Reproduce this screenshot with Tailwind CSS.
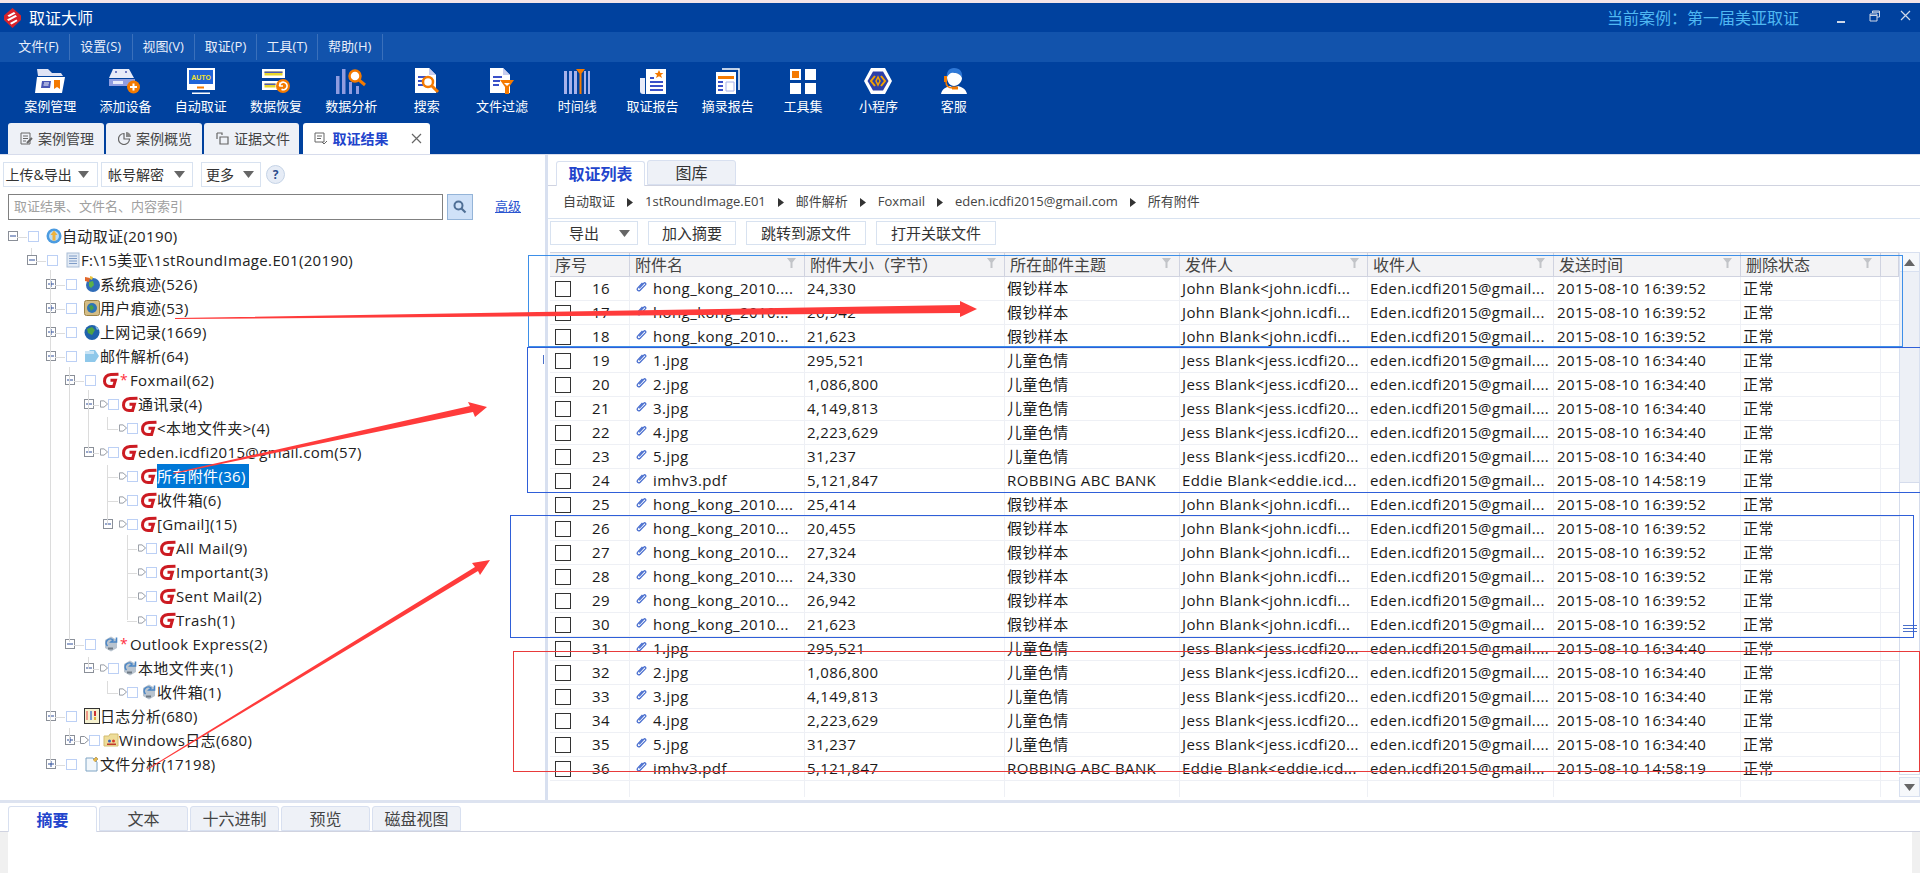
<!DOCTYPE html>
<html lang="zh-CN">
<head>
  <meta charset="UTF-8" />
  <title>取证大师</title>
  <script src="https://cdn.jsdelivr.net/npm/@tailwindcss/browser@4"></script>
</head>
<body class="bg-white">
<svg class="hidden">
  <symbol id="fox" viewBox="0 0 16 16"><path d="M15.500 2.200L8 2.600C3.500 3 1.500 6 1.500 9.300 1.500 12.800 4 14.500 7 14.500H10.600L12.400 8.300H7.500" fill="none" stroke="#cc1b22" stroke-width="3"/></symbol>
  <symbol id="oe" viewBox="0 0 16 16"><path d="M2 4l6-3.500 6 3.500v8l-6 3.500-6-3.500z" fill="#b9c4cf"/><path d="M4.500 10a4 4 0 0 1 5.500-6l-2 2h5.500v-4.500" fill="none" stroke="#4b86c5" stroke-width="1.600"/><path d="M5 12.500h5" stroke="#6f7a85" stroke-width="2"/></symbol>
  <symbol id="root" viewBox="0 0 16 16"><circle cx="8" cy="8" r="7.500" fill="#4b9be0"/><circle cx="8" cy="8" r="5" fill="#bcdcf5"/><path d="M8 2.500l3.500 4.500H9.500v5.500h-3V7H4.500z" fill="#eeb23c"/></symbol>
  <symbol id="doc" viewBox="0 0 16 16"><rect x="2" y="1" width="12" height="14" fill="#e3ebf5" stroke="#a9bdd6"/><path d="M4 4h8M4 6.500h8M4 9h8M4 11.500h8" stroke="#7f9cc7"/></symbol>
  <symbol id="sys" viewBox="0 0 16 16"><circle cx="9" cy="9" r="7" fill="#2f6cb8"/><path d="M5 6l4-1 1 4-3 3-2-2z" fill="#5cb147"/><path d="M1 1l5 1-1 4-4-1z" fill="#e2672a"/><path d="M6 0l3 1-1 3-2-1z" fill="#e9c33c"/></symbol>
  <symbol id="user" viewBox="0 0 16 16"><rect x=".5" y=".5" width="15" height="15" rx="2" fill="#d4bd85" stroke="#9c8245"/><circle cx="8" cy="8" r="5" fill="#2f74b6"/><path d="M5 6l3-1 2 3-3 3z" fill="#48a04a"/></symbol>
  <symbol id="web" viewBox="0 0 16 16"><circle cx="8" cy="8.500" r="7.500" fill="#1f62ac"/><path d="M3 5l5-2 3 3-3 5-4-2z" fill="#4fa344"/><path d="M11 2l4 3-2 1z" fill="#8fc3ea"/></symbol>
  <symbol id="mail" viewBox="0 0 16 16"><path d="M1 3h4l1-1h5l4 6-4 6H1z" fill="#8fc8ea"/><path d="M1 3h9v3H1z" fill="#c9e4f5"/></symbol>
  <symbol id="logi" viewBox="0 0 16 16"><rect x=".5" y=".5" width="15" height="15" fill="#f5f1d0" stroke="#333"/><path d="M3 3v9" stroke="#e98" stroke-width="2"/><path d="M7 3v9" stroke="#79c" stroke-width="2"/><path d="M11 3v5" stroke="#c33" stroke-width="2"/><path d="M11 9v3" stroke="#e2b23c" stroke-width="2"/></symbol>
  <symbol id="win" viewBox="0 0 16 16"><path d="M1 4h5l1-2h8v12H1z" fill="#eedd99" stroke="#d3bd70"/><circle cx="6.500" cy="9" r="1.500" fill="#3b63b5"/><circle cx="10.500" cy="9" r="1.500" fill="#d8392b"/><path d="M4 13h9v-1.500H4z" fill="#c0392b"/></symbol>
  <symbol id="file" viewBox="0 0 16 16"><path d="M2 2h7l4 4v9H2z" fill="#f2f7fb" stroke="#7ea4c4"/><path d="M9 4l3-3 2 2-3 3" fill="#e5b84a" stroke="#9d8140" stroke-width=".6"/></symbol>
  <symbol id="clip" viewBox="0 0 12 12"><path d="M3.500 8.500l5-5.500c1.300-1.300 3 .3 1.700 1.700L4.500 10.500C2.500 12.300.2 10 2 8l5-5.500" fill="none" stroke="#4a6fcf" stroke-width="1.400" transform="translate(0 -.5)"/></symbol>
  <symbol id="filter" viewBox="0 0 9 10"><path d="M0 0h9L5.500 4.500V10h-2V4.500z" fill="#c2c4c8"/></symbol>
  <symbol id="tri" viewBox="0 0 11 7"><path d="M0 0h11L5.500 7z" fill="#666"/></symbol>
</svg>

<div class="relative w-[1920px] h-[873px] overflow-hidden flex flex-col font-['Open_Sans','Noto_Sans_CJK_SC',sans-serif] text-[#222]">
  <!-- top strip of desktop -->
  <div class="h-[3px] bg-[#f3e4e8] shrink-0"></div>

  <!-- title bar -->
  <div class="h-[29px] shrink-0 bg-[#00419e] flex items-center pl-1 pr-2 text-white">
    <svg width="17" height="20" viewBox="0 0 17 20"><path d="M8.500 0L17 7.500V12L8.500 20 0 12V7.500z" fill="#d8232a"/><path d="M3.500 7.500l6.500-3.500 1.500 1.500-6.500 3.500zM3 11.500l8.500-4.500 1.500 1.500-8.500 4.500zM6 15l6.500-3.500 1 1.500-6 3.500z" fill="#fff"/></svg>
    <span class="ml-2 text-[16px]">取证大师</span>
    <span class="ml-auto text-[16px] text-[#4fb8f2] mr-[37px]">当前案例：第一届美亚取证</span>
    <svg width="10" height="10" viewBox="0 0 10 10" class="mt-2"><path d="M1 5h8" stroke="#cfd8e8" stroke-width="2"/></svg>
    <svg width="11" height="12" viewBox="0 0 11 12" class="ml-[23px] -mt-1"><path d="M3.500 3V1h7v6H8M1 4h7v7H1zM1 5.500h7M3.500 2.200h7" fill="none" stroke="#cfd8e8"/></svg>
    <svg width="11" height="11" viewBox="0 0 11 11" class="ml-[20px] mr-[1px] -mt-1"><path d="M1 1l9 9M10 1l-9 9" stroke="#cfd8e8" stroke-width="1.200"/></svg>
  </div>

  <!-- menu bar -->
  <div class="h-[30px] shrink-0 bg-[#1253ac] flex items-center pl-2 text-[13px] text-[#e8eefa]">
    <span class="w-[62px] h-[26px] flex items-center justify-center border-r border-[#3a70bb]">文件(F)</span>
    <span class="w-[62.500px] h-[26px] flex items-center justify-center border-r border-[#3a70bb]">设置(S)</span>
    <span class="w-[62.500px] h-[26px] flex items-center justify-center border-r border-[#3a70bb]">视图(V)</span>
    <span class="w-[62px] h-[26px] flex items-center justify-center border-r border-[#3a70bb]">取证(P)</span>
    <span class="w-[61px] h-[26px] flex items-center justify-center border-r border-[#3a70bb]">工具(T)</span>
    <span class="w-[64.500px] h-[26px] flex items-center justify-center border-r border-[#3a70bb]">帮助(H)</span>
  </div>

  <!-- toolbar + main tabs -->
  <div class="h-[92px] shrink-0 bg-[#00419e] flex flex-col justify-between">
    <div id="toolbar" class="flex pl-[12.500px] text-[13px] text-white">
      <div class="w-[75.300px] flex flex-col items-center pt-[6px]">
        <svg width="32" height="26" viewBox="0 0 32 26"><path d="M3 1h11l4 4h9l2 3H4z" fill="#dfe3f5"/><path d="M3 9h28l-3 16H1z" fill="#fff"/><path d="M8 13h9l-1 7H7z" fill="#4a57b5"/><path d="M10 15h5M9.500 17h5" stroke="#fff"/><path d="M20 12h6v9l-3-2-3 2z" fill="#f47a00"/></svg>
        <span class="mt-[3px] leading-[18px]">案例管理</span>
      </div>
      <div class="w-[75.300px] flex flex-col items-center pt-[6px]">
        <svg width="32" height="26" viewBox="0 0 32 26"><path d="M4 1h16l5 9H0z" fill="#e8ebf8"/><path d="M0 11h26v7H0z" fill="#8f9ce0"/><path d="M4 13h10v3H4z" fill="#fff" opacity=".8"/><circle cx="7" cy="4" r="1" fill="#4a57b5"/><circle cx="17" cy="4" r="1" fill="#4a57b5"/><circle cx="24.500" cy="19" r="6.500" fill="#f47a00"/><path d="M24.500 15.500v7M21 19h7" stroke="#fff" stroke-width="2"/></svg>
        <span class="mt-[3px] leading-[18px]">添加设备</span>
      </div>
      <div class="w-[75.300px] flex flex-col items-center pt-[6px]">
        <svg width="30" height="26" viewBox="0 0 30 26"><path d="M1 0h28v22H1z" fill="#fff"/><path d="M3 2h24v14H3z" fill="#1f64d8"/><text x="15" y="11.500" text-anchor="middle" font-size="7" font-weight="700" fill="#f2e32a" font-family="Liberation Sans">AUTO</text><path d="M11 18.500h7v2h-7z" fill="#f47a00"/><path d="M6 24.500h18v1.500H6z" fill="#fff"/></svg>
        <span class="mt-[3px] leading-[18px]">自动取证</span>
      </div>
      <div class="w-[75.300px] flex flex-col items-center pt-[6px]">
        <svg width="30" height="26" viewBox="0 0 30 26"><path d="M1 1h23v9H1zM1 13h16v9H1z" fill="#fff"/><path d="M3.500 3.500h18v4h-18zM3.500 15.500h11v4h-11z" fill="#e8d62a"/><path d="M3.500 3.500h18v1.500h-18zM3.500 15.500h11v1.500h-11z" fill="#4a57b5"/><circle cx="22" cy="18" r="7" fill="#f47a00"/><path d="M18.500 18a3.800 3.800 0 1 1 2 3.300M19 14.500v3.500h3" fill="none" stroke="#fff" stroke-width="1.600"/></svg>
        <span class="mt-[3px] leading-[18px]">数据恢复</span>
      </div>
      <div class="w-[75.300px] flex flex-col items-center pt-[6px]">
        <svg width="30" height="26" viewBox="0 0 30 26"><path d="M0 8h3.500v18H0zM6 1h3.500v25H6zM13 14h3v12h-3zM20 18h3v8h-3z" fill="#8f9ce0"/><circle cx="19" cy="8" r="5.500" fill="#fff" stroke="#f47a00" stroke-width="2.500"/><path d="M23 12l6 5" stroke="#f47a00" stroke-width="3"/></svg>
        <span class="mt-[3px] leading-[18px]">数据分析</span>
      </div>
      <div class="w-[75.300px] flex flex-col items-center pt-[6px]">
        <svg width="26" height="26" viewBox="0 0 26 26"><path d="M1 0h14l7 7v18H1z" fill="#fff"/><path d="M15 0l7 7h-7z" fill="#c7cdf0"/><path d="M4 9h8M4 13h5M4 17h5" stroke="#3a50c8" stroke-width="2"/><circle cx="14" cy="14" r="5" fill="#fff" stroke="#f47a00" stroke-width="2.500"/><path d="M18 18l6 6" stroke="#f47a00" stroke-width="3"/></svg>
        <span class="mt-[3px] leading-[18px]">搜索</span>
      </div>
      <div class="w-[75.300px] flex flex-col items-center pt-[6px]">
        <svg width="26" height="26" viewBox="0 0 26 26"><path d="M1 0h13l7 7v18H1z" fill="#fff"/><path d="M14 0l7 7h-7z" fill="#c7cdf0"/><path d="M4 9h9M4 13h7M4 17h6" stroke="#3a50c8" stroke-width="2"/><path d="M11 12h14l-5 7v7h-4v-7z" fill="#f47a00"/><path d="M15 15h6l-3 3z" fill="#fff"/></svg>
        <span class="mt-[3px] leading-[18px]">文件过滤</span>
      </div>
      <div class="w-[75.300px] flex flex-col items-center pt-[6px]">
        <svg width="26" height="26" viewBox="0 0 26 26"><path d="M0 3h3v23H0zM5 3h3v23H5zM10 3h3v23h-3zM20 3h2v23h-2zM24 3h2v23h-2z" fill="#a8b2ea"/><path d="M15.500 6h2v20h-2z" fill="#f47a00"/><path d="M12 1h9l-4.500 6z" fill="#f47a00"/></svg>
        <span class="mt-[3px] leading-[18px]">时间线</span>
      </div>
      <div class="w-[75.300px] flex flex-col items-center pt-[6px]">
        <svg width="26" height="26" viewBox="0 0 26 26"><path d="M0 10h5v16H3a3 3 0 0 1-3-3z" fill="#e8ebf8"/><path d="M6 1h20v25H6z" fill="#fff"/><path d="M10 10h4M10 14h13M10 18h13M10 22h13" stroke="#3a50c8" stroke-width="2"/><path d="M19 2l1.400 3h3l-2.400 2 1 3-3-1.800-3 1.800 1-3-2.400-2h3z" fill="#f47a00"/></svg>
        <span class="mt-[3px] leading-[18px]">取证报告</span>
      </div>
      <div class="w-[75.300px] flex flex-col items-center pt-[6px]">
        <svg width="24" height="26" viewBox="0 0 24 26"><path d="M6 1h17v21" fill="none" stroke="#fff" stroke-width="1.500"/><path d="M0 4h20v22H0z" fill="#fff"/><path d="M2 8h16v3H2z" fill="#f47a00"/><path d="M2 14h5M2 18h5M2 22h5" stroke="#3a50c8" stroke-width="2"/><path d="M10 14h8v9h-8z" fill="none" stroke="#a8b2ea"/></svg>
        <span class="mt-[3px] leading-[18px]">摘录报告</span>
      </div>
      <div class="w-[75.300px] flex flex-col items-center pt-[6px]">
        <svg width="26" height="26" viewBox="0 0 26 26"><path d="M0 1h11v11H0z" fill="#fff"/><path d="M2 3h7v7H2z" fill="#f47a00"/><path d="M15 1h11v11H15zM0 15h11v11H0zM15 15h11v11H15z" fill="#fff"/></svg>
        <span class="mt-[3px] leading-[18px]">工具集</span>
      </div>
      <div class="w-[75.300px] flex flex-col items-center pt-[6px]">
        <svg width="28" height="26" viewBox="0 0 28 26"><path d="M7 0h14l7 13-7 13H7L0 13z" fill="#fff"/><path d="M9 3.500h10l5.500 9.500L19 22.500H9L3.500 13z" fill="#2d3fa8"/><path d="M11 8l-4 5 4 5M17 8l4 5-4 5" fill="none" stroke="#f4a200" stroke-width="2"/><path d="M14 9l-2 4 2 4 2-4z" fill="none" stroke="#f4a200" stroke-width="1.500"/></svg>
        <span class="mt-[3px] leading-[18px]">小程序</span>
      </div>
      <div class="w-[75.300px] flex flex-col items-center pt-[6px]">
        <svg width="26" height="26" viewBox="0 0 26 26"><path d="M13 0c6 0 9 4 8 10-1-3-4-5-8-5-3 0-5 2-7 5-1-6 2-10 7-10z" fill="#2f78d6"/><path d="M6 9c2-3 4-5 7-4 4 0 7 2 8 5 0 4-4 8-8 8s-7-4-7-9z" fill="#fff"/><path d="M0 26c1-5 5-7 9-8l4 2 4-2c4 1 8 3 9 8z" fill="#fff"/><path d="M3 8h3v6H3z" fill="#f47a00"/><path d="M5 14c0 4 3 6 7 6" fill="none" stroke="#f47a00" stroke-width="1.500"/><path d="M11 18.500h6v3h-6z" fill="#f47a00"/></svg>
        <span class="mt-[3px] leading-[18px]">客服</span>
      </div>
    </div>
    <div class="flex pl-2 h-[31px] text-[14px] text-[#444]">
      <div class="w-[95.500px] mr-[2.500px] rounded-t-[3px] bg-[#eef1f7] flex items-center pl-3">
        <svg width="13" height="13" viewBox="0 0 13 13"><path d="M1 1h9v11H1zM3 4h5M3 6.500h5M3 9h3" fill="none" stroke="#666"/><path d="M7 11l5-5" stroke="#666" stroke-width="2"/></svg>
        <span class="ml-[5px]">案例管理</span>
      </div>
      <div class="w-[96px] mr-[2px] rounded-t-[3px] bg-[#eef1f7] flex items-center pl-3">
        <svg width="13" height="13" viewBox="0 0 13 13"><path d="M6 1.500a5.500 5.500 0 1 0 5.500 5.500H6z" fill="none" stroke="#666" stroke-width="1.200"/><path d="M8 0a5 5 0 0 1 5 5H8z" fill="#888"/></svg>
        <span class="ml-[5px]">案例概览</span>
      </div>
      <div class="w-[95px] mr-[3.500px] rounded-t-[3px] bg-[#eef1f7] flex items-center pl-3">
        <svg width="13" height="13" viewBox="0 0 13 13"><path d="M1 1h5v2M1 1v6M4 5h8v7H4z" fill="none" stroke="#666" stroke-width="1.200"/></svg>
        <span class="ml-[5px]">证据文件</span>
      </div>
      <div class="w-[127.500px] rounded-t-[3px] bg-white flex items-center pl-[11px]">
        <svg width="14" height="13" viewBox="0 0 14 13"><path d="M1 1h9v9H1zM3 4h5M3 6.500h4" fill="none" stroke="#666"/><path d="M8 10l2 2 3-3" fill="none" stroke="#666"/></svg>
        <span class="ml-[5px] text-[#2244cc] font-semibold">取证结果</span>
        <svg width="11" height="11" viewBox="0 0 11 11" class="ml-[22px]"><path d="M1 1l9 9M10 1l-9 9" stroke="#666" stroke-width="1.200"/></svg>
      </div>
    </div>
  </div>

  <!-- main area -->
  <div class="flex flex-1 min-h-0 border-t border-[#d7dcec]">
    <!-- left pane -->
    <div class="w-[545px] shrink-0 relative">
      <div class="flex items-center pl-[2.500px] pt-[7px] text-[14px] text-[#333]">
        <div class="w-[95px] h-[25px] border border-[#d8e2f0] flex items-center pl-[2px]">上传&amp;导出<svg width="11" height="7" class="ml-[6px]"><use href="#tri"/></svg></div>
        <div class="w-[92px] h-[25px] ml-[3.500px] border border-[#d8e2f0] flex items-center pl-[6px]">帐号解密<svg width="11" height="7" class="ml-[10px]"><use href="#tri"/></svg></div>
        <div class="w-[60px] h-[25px] ml-[8px] border border-[#d8e2f0] flex items-center pl-[4px]">更多<svg width="11" height="7" class="ml-[9px]"><use href="#tri"/></svg></div>
        <div class="w-[19px] h-[19px] ml-[5px] rounded-full bg-[#e6ecf6] border border-[#c5d3e6] flex items-center justify-center text-[12px] font-bold text-[#2a4a8a]">?</div>
      </div>
      <div class="flex items-center pl-2 mt-[7px]">
        <div class="w-[435px] h-[26px] border border-[#808080] flex items-center pl-[5px] text-[13px] text-[#a0a0a0]">取证结果、文件名、内容索引</div>
        <div class="w-[26px] h-[26px] ml-1 border border-[#94b4d8] bg-[#cfe1f8] flex items-center justify-center">
          <svg width="14" height="14" viewBox="0 0 14 14"><circle cx="5.500" cy="5.500" r="4" fill="none" stroke="#4f6f96" stroke-width="2"/><path d="M8.500 8.500l4 4" stroke="#4f6f96" stroke-width="2.200"/></svg>
        </div>
        <span class="ml-[22px] text-[13px] text-[#2a55d0] underline">高级</span>
      </div>
      <div id="tree" class="mt-[4px] text-[15px] leading-6 tracking-[0.35px] text-[#222]"></div>
    </div>

    <!-- divider -->
    <div class="w-[3px] shrink-0 bg-[#d8e0f0]"></div>

    <!-- right pane -->
    <div class="flex-1 min-w-0 flex flex-col">
      <div class="h-[31px] flex items-end pl-[8px] border-b border-[#d0d3e0]">
        <div class="w-[89px] h-[25px] rounded-t-[3px] border border-b-0 border-[#d8e0f0] bg-white flex items-center justify-center text-[16px] font-semibold text-[#2244cc] -mb-px">取证列表</div>
        <div class="w-[89px] h-[25px] ml-[2px] rounded-t-[3px] border border-[#d8e0f0] bg-[#eef1f7] flex items-center justify-center text-[16px] text-[#333]">图库</div>
      </div>
      <div class="h-[33px] flex items-center pl-[15px] text-[13px] text-[#444] border-b border-[#d8e2f0]">
        <span>自动取证</span><span class="w-[30px] flex justify-center"><svg width="6" height="9"><path d="M0 0l6 4.500L0 9z" fill="#333"/></svg></span>
        <span>1stRoundImage.E01</span><span class="w-[30px] flex justify-center"><svg width="6" height="9"><path d="M0 0l6 4.500L0 9z" fill="#333"/></svg></span>
        <span>邮件解析</span><span class="w-[30px] flex justify-center"><svg width="6" height="9"><path d="M0 0l6 4.500L0 9z" fill="#333"/></svg></span>
        <span>Foxmail</span><span class="w-[30px] flex justify-center"><svg width="6" height="9"><path d="M0 0l6 4.500L0 9z" fill="#333"/></svg></span>
        <span>eden.icdfi2015@gmail.com</span><span class="w-[30px] flex justify-center"><svg width="6" height="9"><path d="M0 0l6 4.500L0 9z" fill="#333"/></svg></span>
        <span>所有附件</span>
      </div>
      <div class="flex pl-[2px] pt-[2px] text-[15px] text-[#333]">
        <div class="w-[88px] h-[24px] border border-[#d8e2f0] flex items-center pl-[18px]">导出<svg width="11" height="7" class="ml-[20px]"><use href="#tri"/></svg></div>
        <div class="w-[88px] h-[24px] ml-[10px] border border-[#d8e2f0] flex items-center justify-center">加入摘要</div>
        <div class="w-[120px] h-[24px] ml-[10px] border border-[#d8e2f0] flex items-center justify-center">跳转到源文件</div>
        <div class="w-[120px] h-[24px] ml-[10px] border border-[#d8e2f0] flex items-center justify-center">打开关联文件</div>
      </div>
      <div class="flex flex-1 min-h-0 mt-[7px] pl-[2px]">
        <div class="w-[1349px] shrink-0">
          <div id="thead" class="grid grid-cols-[80px_175px_200px_175px_188px_186px_187px_140px_18px] h-[25px] bg-[#f3f3f5] border-y border-[#d0d3e0] text-[16px] text-[#444]"></div>
          <div id="tbody" class="text-[15px] tracking-[0.4px] text-[#1a1a1a]"></div>
        </div>
        <!-- scrollbar -->
        <div class="flex-1 flex flex-col">
          <div class="h-[20px] bg-[#f6f8fb] border border-[#d8e0f0] flex items-center justify-center"><svg width="11" height="7" class="rotate-180"><use href="#tri"/></svg></div>
          <div class="h-[210px] bg-[#edf0f6] border-x border-[#d8e0f0]"></div>
          <div class="h-[293px] bg-white border border-[#d5dcec] flex items-center justify-center">
            <div class="w-[14px] h-[7px] border-y border-[#4b70c9] flex items-center"><div class="w-full h-px bg-[#4b70c9]"></div></div>
          </div>
          <div class="h-[20px] mt-[2px] bg-[#f6f8fb] border border-[#d8e0f0] flex items-center justify-center"><svg width="11" height="7"><use href="#tri"/></svg></div>
        </div>
      </div>
    </div>
  </div>

  <!-- bottom panel -->
  <div class="h-[73px] shrink-0 border-t-[3px] border-[#dde3f0] flex flex-col">
    <div class="h-[26px] mt-[3px] flex pl-2 text-[16px] text-[#444] border-b border-[#d0d3e0]">
      <div class="w-[89px] h-[26px] rounded-t-[3px] border border-b-0 border-[#d8e0f0] bg-white flex items-center justify-center font-semibold text-[#2244cc]">摘要</div>
      <div class="w-[89px] h-[25px] ml-[2px] rounded-t-[3px] border border-[#d8e0f0] bg-[#eef1f7] flex items-center justify-center">文本</div>
      <div class="w-[89px] h-[25px] ml-[2px] rounded-t-[3px] border border-[#d8e0f0] bg-[#eef1f7] flex items-center justify-center">十六进制</div>
      <div class="w-[89px] h-[25px] ml-[2px] rounded-t-[3px] border border-[#d8e0f0] bg-[#eef1f7] flex items-center justify-center">预览</div>
      <div class="w-[89px] h-[25px] ml-[2px] rounded-t-[3px] border border-[#d8e0f0] bg-[#eef1f7] flex items-center justify-center">磁盘视图</div>
    </div>
    <div class="flex-1 flex justify-between">
      <div class="w-2 bg-[#f0f0f0]"></div>
      <div class="w-2 bg-[#f0f0f0]"></div>
    </div>
  </div>

  <!-- tree guide lines and the red/blue marks drawn over the screenshot -->
  <svg class="absolute inset-0 pointer-events-none" width="1920" height="873" viewBox="0 0 1920 873" fill="none" shape-rendering="crispEdges">
    <g stroke="#dcdcdc">
      <path d="M31.500 248v7M50.500 270v493M69.500 367v275M88.500 390v63M107.500 417v12M107.500 465v60M127.500 535v85M88.500 657v12M107.500 681v12M69.500 728v13"/>
      <path d="M17 237h10M36 261h10M55 285h10M55 309h10M55 333h10M55 357h10M74 381h10M93 405h6M107 429h11M93 453h6M107 477h11M107 501h11M127 549h10M127 573h10M127 597h10M127 621h10M74 645h10M93 669h6M107 693h11M55 717h10M74 741h6M55 765h10"/>
    </g>
    <path d="M543.500 355v9" stroke="#4b70c9"/>
    <rect x="528.500" y="255.500" width="1374" height="91" stroke="#3d8fe8"/>
    <rect x="527.500" y="347.500" width="1400" height="145" stroke="#2f5fd8"/>
    <rect x="510.500" y="515.500" width="1403" height="122" stroke="#2f5fd8"/>
    <rect x="513.500" y="651.500" width="1406" height="120" stroke="#e83a3a"/>
    <g fill="#ff3b3b" shape-rendering="auto">
      <path d="M175 318L960 305 960 301 977 309 960 317 960 313 175 319z"/>
      <path d="M173 473L470 406 468 402 487 407 475 417 473 412 173 474z"/>
      <path d="M147 769L475 567 472 563 490 560 480 575 478 571 147 770z"/>
    </g>
  </svg>
</div>

<script>
  // tree: [x of expander, expander (+/-/none), has arrow, icon, star, label, selected]
  const treeRows = [
    [8, '-', 0, 'root', 0, '自动取证(20190)'],
    [27, '-', 0, 'doc', 0, 'F:\\15美亚\\1stRoundImage.E01(20190)'],
    [46, '+', 0, 'sys', 0, '系统痕迹(526)'],
    [46, '+', 0, 'user', 0, '用户痕迹(53)'],
    [46, '+', 0, 'web', 0, '上网记录(1669)'],
    [46, '-', 0, 'mail', 0, '邮件解析(64)'],
    [65, '-', 0, 'fox', 1, 'Foxmail(62)'],
    [84, '-', 1, 'fox', 0, '通讯录(4)'],
    [103, '', 1, 'fox', 0, '&lt;本地文件夹&gt;(4)'],
    [84, '-', 1, 'fox', 0, 'eden.icdfi2015@gmail.com(57)'],
    [103, '', 1, 'fox', 0, '所有附件(36)', 1],
    [103, '', 1, 'fox', 0, '收件箱(6)'],
    [103, '-', 1, 'fox', 0, '[Gmail](15)'],
    [122, '', 1, 'fox', 0, 'All Mail(9)'],
    [122, '', 1, 'fox', 0, 'Important(3)'],
    [122, '', 1, 'fox', 0, 'Sent Mail(2)'],
    [122, '', 1, 'fox', 0, 'Trash(1)'],
    [65, '-', 0, 'oe', 1, 'Outlook Express(2)'],
    [84, '-', 1, 'oe', 0, '本地文件夹(1)'],
    [103, '', 1, 'oe', 0, '收件箱(1)'],
    [46, '-', 0, 'logi', 0, '日志分析(680)'],
    [65, '+', 2, 'win', 0, 'Windows日志(680)'],
    [46, '+', 0, 'file', 0, '文件分析(17198)'],
  ];
  const expander = k => !k ? '' :
    `<svg width="10" height="10" viewBox="0 0 10 10"><rect x=".5" y=".5" width="9" height="9" fill="#fff" stroke="#8a8f98"/><path d="M2 5h6${k === '+' ? 'M5 2v6' : ''}" stroke="#2f4f9a"/></svg>`;
  const arrow = '<svg width="9" height="8" viewBox="0 0 9 8"><path d="M.5.500h4l4 3.500-4 3.500h-4z" fill="#fff" stroke="#8a8f98"/></svg>';
  const check = '<span class="w-[11px] h-[11px] border border-[#bcd0f5] bg-white shrink-0"></span>';

  document.getElementById('tree').innerHTML = treeRows.map(([x, exp, arr, icon, star, label, sel]) => {
    const head = arr === 1
      ? `<span class="w-[16px] flex shrink-0">${expander(exp)}</span><span class="w-[8px] flex shrink-0">${arrow}</span><span class="w-[14px] flex shrink-0">${check}</span>`
      : arr === 2
        ? `<span class="w-[15px] flex shrink-0">${expander(exp)}</span><span class="w-[9px] flex shrink-0">${arrow}</span><span class="w-[14px] flex shrink-0">${check}</span>`
        : `<span class="w-[20px] flex shrink-0">${expander(exp)}</span><span class="w-[18px] flex shrink-0">${check}</span>`;
    const mark = star ? '<span class="w-[11px] text-[#ff3040] text-[14px] shrink-0 pl-[1px]">*</span>' : '';
    const text = sel ? `<span class="bg-[#0078d7] text-white pr-[3px]">${label}</span>` : `<span>${label}</span>`;
    return `<div class="flex items-center h-6 whitespace-nowrap" style="padding-left:${x}px">${head}<svg width="16" height="16" class="shrink-0"><use href="#${icon}"/></svg>${mark}${text}</div>`;
  }).join('');

  const heads = ['序号', '附件名', '附件大小（字节）', '所在邮件主题', '发件人', '收件人', '发送时间', '删除状态', ''];
  document.getElementById('thead').innerHTML = heads.map((h, i) =>
    `<div class="border-r border-[#d0d3e0] flex items-center pl-[5px] relative">${h}${i > 0 && i < 8 ? '<svg width="9" height="10" class="absolute right-[8px] top-[5px]"><use href="#filter"/></svg>' : ''}</div>`
  ).join('');

  const hk = '假钞样本', john = 'John Blank&lt;john.icdfi...', edenU = 'Eden.icdfi2015@gmail...', t1 = '2015-08-10 16:39:52';
  const kid = '儿童色情', jess = 'Jess Blank&lt;jess.icdfi20...', eden = 'eden.icdfi2015@gmail....', t2 = '2015-08-10 16:34:40';
  const jpgs = [
    ['1.jpg', '295,521'], ['2.jpg', '1,086,800'], ['3.jpg', '4,149,813'], ['4.jpg', '2,223,629'], ['5.jpg', '31,237'],
  ].map(r => [r[0], r[1], kid, jess, eden, t2]);
  const pdf = ['imhv3.pdf', '5,121,847', 'ROBBING ABC BANK', 'Eddie Blank&lt;eddie.icd...', 'eden.icdfi2015@gmail...', '2015-08-10 14:58:19'];
  const hong = (name, size) => [name, size, hk, john, edenU, t1];
  const rows = [
    hong('hong_kong_2010....', '24,330'), hong('hong_kong_2010...', '26,942'), hong('hong_kong_2010...', '21,623'),
    ...jpgs, pdf,
    hong('hong_kong_2010....', '25,414'), hong('hong_kong_2010...', '20,455'), hong('hong_kong_2010...', '27,324'),
    hong('hong_kong_2010....', '24,330'), hong('hong_kong_2010...', '26,942'), hong('hong_kong_2010...', '21,623'),
    ...jpgs, pdf,
  ];
  document.getElementById('tbody').innerHTML = rows.map((r, i) => `
    <div class="grid grid-cols-[80px_175px_200px_175px_188px_186px_187px_140px_18px] h-6 border-b border-[#eef0f5] whitespace-nowrap">
      <div class="border-r border-[#eef0f5] flex items-center pl-[5px]"><span class="w-4 h-4 border border-[#333] shrink-0"></span><span class="ml-[21px]">${i + 16}</span></div>
      <div class="border-r border-[#eef0f5] flex items-center pl-[6px] overflow-hidden"><svg width="11" height="11" class="shrink-0 -mt-1"><use href="#clip"/></svg><span class="ml-[6px]">${r[0]}</span></div>
      <div class="border-r border-[#eef0f5] flex items-center pl-[2px] overflow-hidden">${r[1]}</div>
      <div class="border-r border-[#eef0f5] flex items-center pl-[2px] overflow-hidden">${r[2]}</div>
      <div class="border-r border-[#eef0f5] flex items-center pl-[2px] overflow-hidden">${r[3]}</div>
      <div class="border-r border-[#eef0f5] flex items-center pl-[2px] overflow-hidden">${r[4]}</div>
      <div class="border-r border-[#eef0f5] flex items-center pl-[3px] overflow-hidden">${r[5]}</div>
      <div class="border-r border-[#eef0f5] flex items-center pl-[2px]">正常</div>
      <div></div>
    </div>`).join('') + `
    <div class="grid grid-cols-[80px_175px_200px_175px_188px_186px_187px_140px_18px] h-[16px]">
      <div class="border-r border-[#eef0f5]"></div><div class="border-r border-[#eef0f5]"></div><div class="border-r border-[#eef0f5]"></div><div class="border-r border-[#eef0f5]"></div><div class="border-r border-[#eef0f5]"></div><div class="border-r border-[#eef0f5]"></div><div class="border-r border-[#eef0f5]"></div><div class="border-r border-[#eef0f5]"></div><div></div>
    </div>`;
</script>
</body>
</html>
